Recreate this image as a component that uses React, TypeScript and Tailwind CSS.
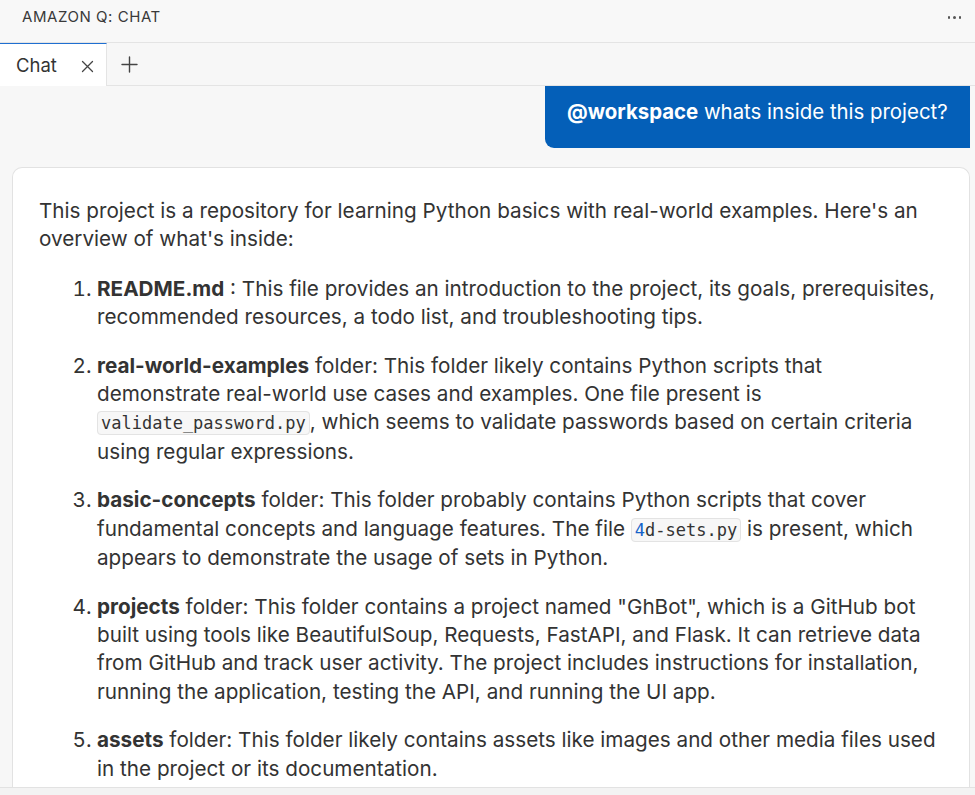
import React from "react";

const Code = ({ children }: { children: React.ReactNode }) => (
  <code className="font-['DejaVu_Sans_Mono','Liberation_Mono',monospace] text-[17px] bg-[#f7f7f7] border border-[#e3e3e3] rounded-[4px] px-[3px] py-[1px] text-[#333]">
    {children}
  </code>
);

export default function App() {
  return (
    <div className="w-[975px] h-[795px] overflow-hidden bg-[#f7f7f7] flex flex-col font-['Inter','Noto_Sans',sans-serif] text-[#333]">
      {/* Header */}
      <div className="h-[43px] shrink-0 flex items-center justify-between pl-[22px] pr-[14px] pb-[7px] border-b border-[#e4e4e4] bg-[#f8f8f8]">
        <span className="text-[15px] tracking-[0.55px] text-[#3a3a3a]">AMAZON Q: CHAT</span>
        <span className="flex gap-[3px] items-center">
          <span className="w-[2.5px] h-[2.5px] rounded-full bg-[#555]" />
          <span className="w-[2.5px] h-[2.5px] rounded-full bg-[#555]" />
          <span className="w-[2.5px] h-[2.5px] rounded-full bg-[#555]" />
        </span>
      </div>
      {/* Tabs */}
      <div className="h-[43px] shrink-0 flex items-stretch border-b border-[#e4e4e4] bg-[#f7f7f7]">
        <div className="w-[107px] bg-white border-t border-t-[#1f6fd1] border-r border-r-[#e4e4e4] flex items-center pl-[16px] pr-[12px] pt-[2px] justify-between -mb-px">
          <span className="text-[18.5px] text-[#333]">Chat</span>
          <svg width="13" height="13" viewBox="0 0 13 13">
            <path d="M1.5 1.5 L11.5 11.5 M11.5 1.5 L1.5 11.5" stroke="#444" strokeWidth="1.3" strokeLinecap="round" />
          </svg>
        </div>
        <div className="flex items-center pl-[14px]">
          <svg width="17" height="17" viewBox="0 0 17 17">
            <path d="M8.5 1 V16 M1 8.5 H16" stroke="#444" strokeWidth="1.4" strokeLinecap="round" />
          </svg>
        </div>
      </div>
      {/* Chat body */}
      <div className="flex-1 overflow-hidden flex flex-col">
        <div className="flex justify-end pr-[5px] shrink-0">
          <div className="w-[425px] h-[62px] bg-[#045fb8] text-white rounded-bl-[9px] flex items-center pl-[22px] pb-[9px] text-[20.4px]">
            <span>
              <b className="font-bold">@workspace</b> whats inside this project?
            </span>
          </div>
        </div>
        <div className="flex-1 mt-[19px] ml-[12px] mr-[5px] bg-white border border-b-0 border-[#e2e2e2] rounded-t-[10px] pl-[26px] pr-[4px] pt-[29px] text-[20.7px] leading-[28.3px] text-[#333] whitespace-nowrap overflow-hidden">
          <p>
            This project is a repository for learning Python basics with real-world examples. Here's an
            <br />
            overview of what's inside:
          </p>
          <ol className="list-decimal pl-[58px] mt-[21px] flex flex-col gap-[20.5px] marker:text-[#333]">
            <li>
              <b className="font-bold">README.md</b> : This file provides an introduction to the project, its goals, prerequisites,
              <br />
              recommended resources, a todo list, and troubleshooting tips.
            </li>
            <li>
              <b className="font-bold">real-world-examples</b> folder: This folder likely contains Python scripts that
              <br />
              demonstrate real-world use cases and examples. One file present is
              <br />
              <Code>validate_password.py</Code>, which seems to validate passwords based on certain criteria
              <br />
              using regular expressions.
            </li>
            <li>
              <b className="font-bold">basic-concepts</b> folder: This folder probably contains Python scripts that cover
              <br />
              fundamental concepts and language features. The file{" "}
              <Code>
                <span className="text-[#1463c9]">4</span>d-sets.py
              </Code>{" "}
              is present, which
              <br />
              appears to demonstrate the usage of sets in Python.
            </li>
            <li>
              <b className="font-bold">projects</b> folder: This folder contains a project named "GhBot", which is a GitHub bot
              <br />
              built using tools like BeautifulSoup, Requests, FastAPI, and Flask. It can retrieve data
              <br />
              from GitHub and track user activity. The project includes instructions for installation,
              <br />
              running the application, testing the API, and running the UI app.
            </li>
            <li>
              <b className="font-bold">assets</b> folder: This folder likely contains assets like images and other media files used
              <br />
              in the project or its documentation.
            </li>
          </ol>
        </div>
      </div>
      <div className="h-[8px] shrink-0 border-t border-[#e2e2e2] bg-[#f3f3f3]" />
    </div>
  );
}
